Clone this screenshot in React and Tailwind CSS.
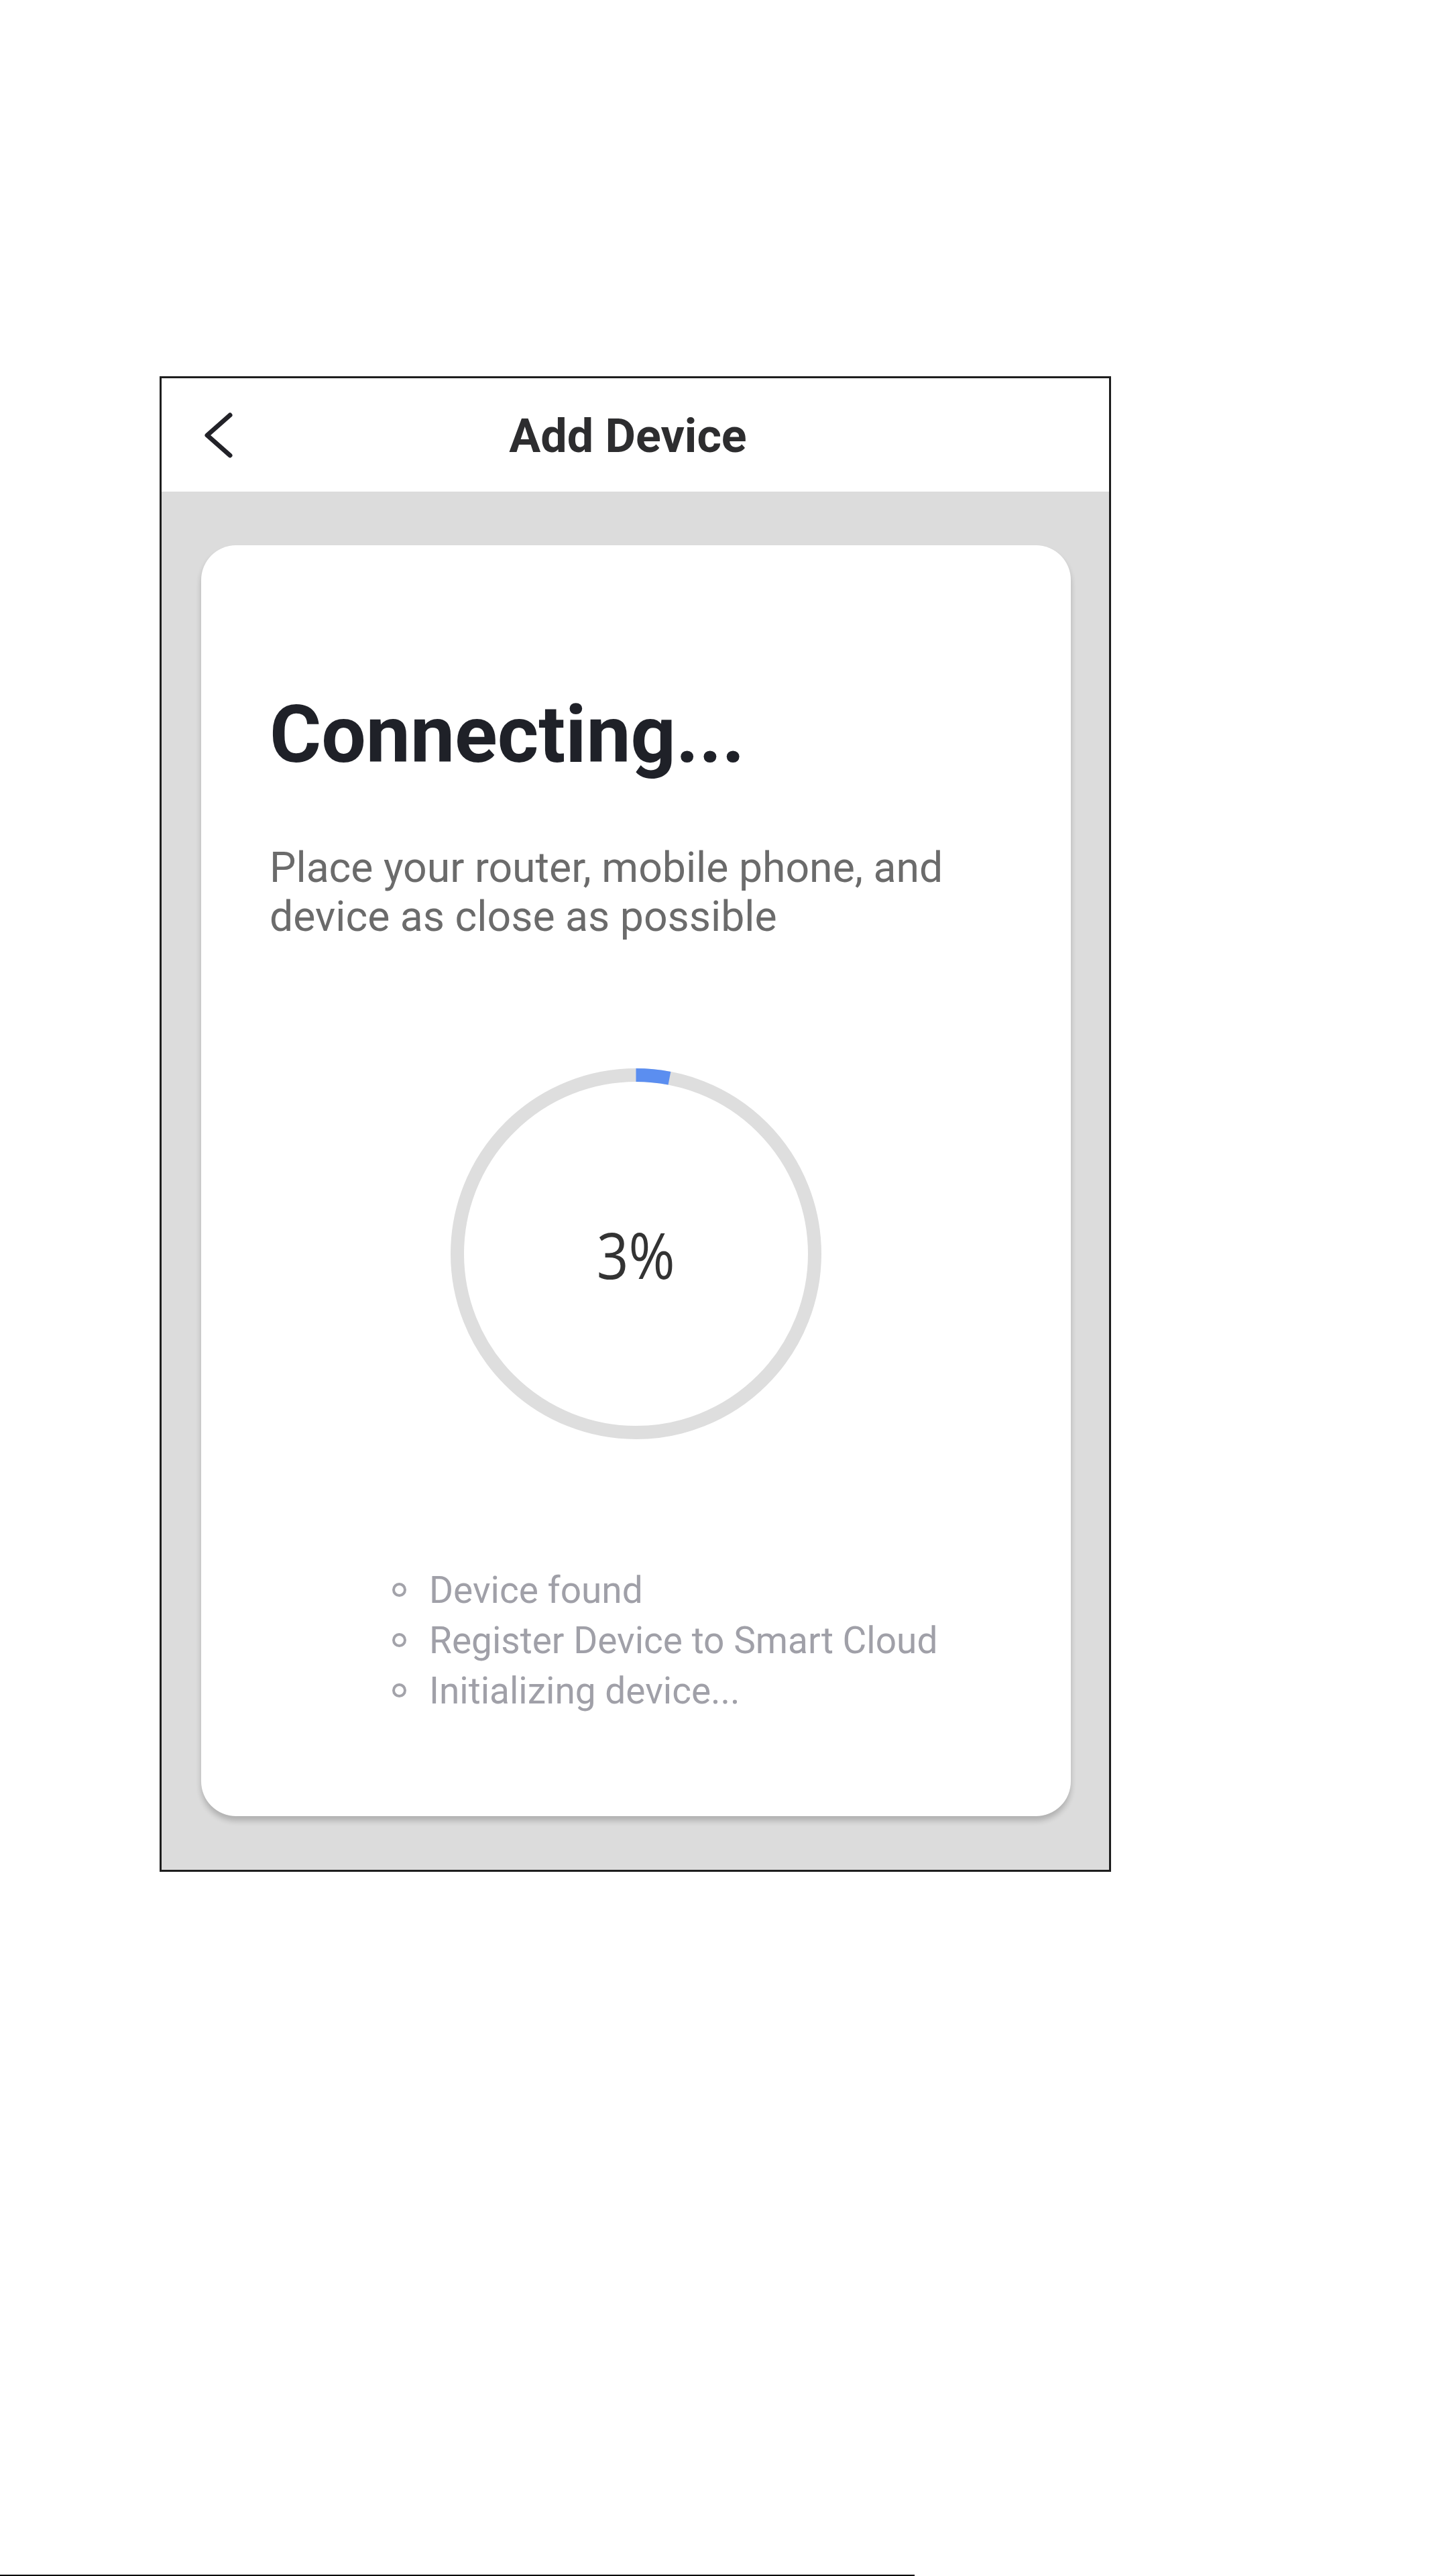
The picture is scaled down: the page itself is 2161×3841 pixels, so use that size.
import React from "react";

const roboto = { fontFamily: "Roboto, 'Liberation Sans', sans-serif" };

function Progress({ pct }) {
  const size = 553;
  const sw = 20;
  const r = (size - sw) / 2;
  const c = 2 * Math.PI * r;
  return (
    <div className="relative mx-auto w-[553px] h-[553px]">
      <svg width={size} height={size} viewBox={`0 0 ${size} ${size}`}>
        <circle cx={size / 2} cy={size / 2} r={r} fill="none" stroke="#dedede" strokeWidth={sw} />
        <circle
          cx={size / 2}
          cy={size / 2}
          r={r}
          fill="none"
          stroke="#5b8ef0"
          strokeWidth={sw}
          strokeDasharray={`${(c * pct) / 100} ${c}`}
          transform={`rotate(-90 ${size / 2} ${size / 2})`}
        />
      </svg>
      <div className="absolute inset-0 flex items-center justify-center">
        <span
          className="inline-block scale-x-[0.87] text-[96px] leading-none text-[#333333] font-normal"
          style={{ fontFamily: "'Open Sans', 'Noto Sans', sans-serif" }}
        >
          {pct}%
        </span>
      </div>
    </div>
  );
}

function Step({ children }) {
  return (
    <div className="flex items-center h-[75px]">
      <span className="w-[21px] h-[21px] rounded-full border-[4px] border-[#a3a3aa] mt-[-2px]" />
      <span className="ml-[34px] text-[55px] leading-[75px] text-[#a0a0a8]">{children}</span>
    </div>
  );
}

export default function App() {
  return (
    <div className="w-[2161px] h-[3841px] bg-white flex flex-col" style={roboto}>
      <div className="pt-[561px] pl-[238px]">
        <div className="w-[1419px] h-[2230px] border-[3px] border-[#1e1e1e] flex flex-col">
          <div className="h-[169px] bg-white grid grid-cols-[1fr_auto_1fr] items-center">
            <div className="pl-[62px] flex items-center">
              <svg width="48" height="72" viewBox="0 0 48 72" fill="none">
                <path d="M40 6 L6 36 L40 66" stroke="#222228" strokeWidth="7" strokeLinecap="round" strokeLinejoin="round" />
              </svg>
            </div>
            <div className="mr-[22px] text-[70px] font-bold text-[#2d2d2f] leading-none pt-[2px]">Add Device</div>
            <div />
          </div>
          <div className="flex-1 bg-[#dcdcdc] pl-[59px] pr-[57px] pt-[80px]">
            <div className="h-[1895px] bg-white rounded-[52px] shadow-[0_7px_9px_rgba(0,0,0,0.2)] pt-[223px] px-[102px]">
              <div className="text-[118px] leading-[120px] font-bold text-[#1f2128]">Connecting...</div>
              <div className="mt-[101px] text-[62.5px] leading-[73px] text-[#6b6b6b]">
                Place your router, mobile phone, and
                <br />
                device as close as possible
              </div>
              <div className="mt-[190px]">
                <Progress pct={3} />
              </div>
              <div className="mt-[188px] ml-[183px] flex flex-col">
                <Step>Device found</Step>
                <Step>Register Device to Smart Cloud</Step>
                <Step>Initializing device...</Step>
              </div>
            </div>
          </div>
        </div>
      </div>
      <div className="mt-auto h-[2px] w-[1364px] bg-black" />
    </div>
  );
}
